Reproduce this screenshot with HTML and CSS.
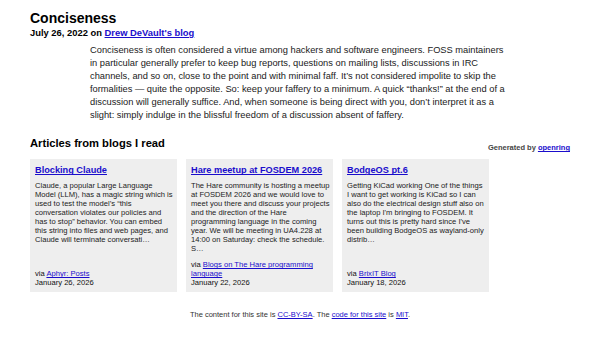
FILE: index.html
```html
<!DOCTYPE html>
<html lang="en">
<head>
    <meta charset="UTF-8">
    <meta name="viewport" content="width=device-width, initial-scale=1.0">
    <title>Conciseness</title>
    <link rel="stylesheet" href="styles.css">
</head>
<body>
    <main class="page">
        <!-- post header -->
        <h1 class="post-title">Conciseness</h1>
        <div class="post-meta">July 26, 2022 on <a href="#">Drew DeVault's blog</a></div>

        <article class="post-body">
            <p>Conciseness is often considered a virtue among hackers and software engineers. FOSS maintainers in particular generally prefer to keep bug reports, questions on mailing lists, discussions in IRC channels, and so on, close to the point and with minimal faff. It’s not considered impolite to skip the formalities — quite the opposite. So: keep your faffery to a minimum. A quick “thanks!” at the end of a discussion will generally suffice. And, when someone is being direct with you, don’t interpret it as a slight: simply indulge in the blissful freedom of a discussion absent of faffery.</p>
        </article>

        <!-- openring -->
        <section class="webring">
            <div class="webring-head">
                <h2>Articles from blogs I read</h2>
                <span class="attribution">Generated by <a href="#">openring</a></span>
            </div>
            <div class="articles">
                <div class="article">
                    <h3><a href="#">Blocking Claude</a></h3>
                    <p class="summary">Claude, a popular Large Language Model (LLM), has a magic string which is used to test the model’s “this conversation violates our policies and has to stop” behavior. You can embed this string into files and web pages, and Claude will terminate conversati…</p>
                    <small class="source">via <a href="#">Aphyr: Posts</a></small>
                    <small class="date">January 26, 2026</small>
                </div>
                <div class="article">
                    <h3><a href="#">Hare meetup at FOSDEM 2026</a></h3>
                    <p class="summary">The Hare community is hosting a meetup at FOSDEM 2026 and we would love to meet you there and discuss your projects and the direction of the Hare programming language in the coming year. We will be meeting in UA4.228 at 14:00 on Saturday: check the schedule. S…</p>
                    <small class="source">via <a href="#">Blogs on The Hare programming language</a></small>
                    <small class="date">January 22, 2026</small>
                </div>
                <div class="article">
                    <h3><a href="#">BodgeOS pt.6</a></h3>
                    <p class="summary">Getting KiCad working One of the things I want to get working is KiCad so I can also do the electrical design stuff also on the laptop I'm bringing to FOSDEM. It turns out this is pretty hard since I've been building BodgeOS as wayland-only distrib…</p>
                    <small class="source">via <a href="#">BrixIT Blog</a></small>
                    <small class="date">January 18, 2026</small>
                </div>
            </div>
        </section>

        <footer class="site-footer">
            The content for this site is <a href="#">CC-BY-SA</a>. The <a href="#">code for this site</a> is <a href="#">MIT</a>.
        </footer>
    </main>
</body>
</html>
```

FILE: styles.css
```css
body {
    margin: 0;
    background: white;
    color: black;
    font-family: "Liberation Sans", Arial, sans-serif;
}

a {
    color: #1a0dcc;
}

.page {
    padding: 10px 30px 0 30px;
}

/* post header */
.post-title {
    font-size: 14px;
    line-height: 16px;
    margin: 0;
}

.post-meta {
    font-size: 9.4px;
    font-weight: bold;
    line-height: 13px;
}

.post-body {
    padding: 0 60px 0 60px;
    margin-top: 5px;
}

.post-body p {
    font-size: 9.3px;
    line-height: 12.9px;
    margin: 0;
    color: #1a1a1a;
}

/* openring */
.webring {
    margin-top: 15px;
}

.webring-head {
    display: flex;
    justify-content: space-between;
    align-items: flex-end;
}

.webring h2 {
    font-size: 11.2px;
    line-height: 14px;
    margin: 0;
}

.attribution {
    font-size: 7.5px;
    font-weight: bold;
    color: #444;
    line-height: 12px;
    margin-bottom: -4px;
}

.articles {
    display: flex;
    gap: 9px;
    margin-top: 9px;
}

.article {
    width: 147px;
    box-sizing: border-box;
    background: #eee;
    padding: 5px 3.5px 4px 5px;
    display: flex;
    flex-direction: column;
}

.article h3 {
    font-size: 9.2px;
    line-height: 12px;
    margin: 0 0 5px 0;
}

.summary {
    font-size: 7.6px;
    line-height: 9px;
    margin: 0;
    color: #222;
    flex: 1;
}

.article small {
    display: block;
    font-size: 7.6px;
    line-height: 8.7px;
    color: #111;
}

.source {
    margin-top: 8px;
}

.site-footer {
    text-align: center;
    font-size: 7.5px;
    line-height: 9px;
    color: #333;
    margin-top: 18px;
}
```
